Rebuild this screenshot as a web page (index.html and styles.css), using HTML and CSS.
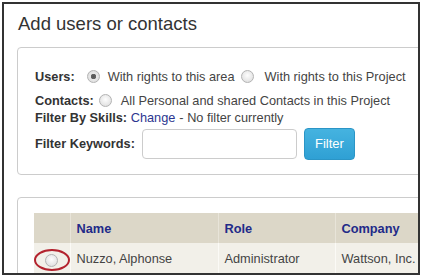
FILE: index.html
```html
<html>

<head>
	<title>Add users or contacts</title>
	<link rel="stylesheet" href="styles.css">
</head>

<body>
	<div class="frame">
		<h2 class="title">Add users or contacts</h2>

		<div class="panel filters">
			<div class="row">
				<b>Users:</b>
				<span class="radio checked first"></span>
				<span>With rights to this area</span>
				<span class="radio second"></span>
				<span>With rights to this Project</span>
			</div>
			<div class="row contacts">
				<b>Contacts:</b>
				<span class="radio"></span>
				<span>All Personal and shared Contacts in this Project</span>
			</div>
			<div class="row skills">
				<b>Filter By Skills:</b>
				<a href="#">Change</a>
				<span>- No filter currently</span>
			</div>
			<div class="row keywords">
				<b>Filter Keywords:</b>
				<input type="text" id="keywords" value="">
				<button type="button" class="btn">Filter</button>
			</div>
		</div>

		<div class="panel results">
			<table>
				<colgroup>
					<col class="c-pick">
					<col class="c-name">
					<col class="c-role">
					<col class="c-company">
				</colgroup>
				<tr>
					<th></th>
					<th>Name</th>
					<th>Role</th>
					<th>Company</th>
				</tr>
				<tr>
					<td class="pick"><span class="radio"></span><span class="mark"></span></td>
					<td>Nuzzo, Alphonse</td>
					<td>Administrator</td>
					<td>Wattson, Inc.</td>
				</tr>
			</table>
		</div>
	</div>
</body>

</html>
```

FILE: styles.css
```css
body { margin: 0; font-family: "Liberation Sans", Arial, sans-serif; font-size: 12.75px; color: #444; }
.frame { margin: 2px; width: 418px; height: 273px; box-sizing: border-box; border: 2px solid #333; padding: 9px 0 0 13px; overflow: hidden; background: #fff; }
.title { margin: 0 0 12px 1px; font-size: 18.5px; line-height: 22px; font-weight: normal; color: #333; }

.panel { width: 440px; border: 1px solid #ccc; border-radius: 4px; }
.filters { padding: 20px 17px 15px; }
.results { margin-top: 22px; padding: 15px 16px; }

.row { display: flex; align-items: center; height: 17px; line-height: 17px; white-space: nowrap; }
.row b { color: #333; }
.contacts { margin-top: 7px; }
.keywords { margin-top: 2px; height: 31px; }
.skills a { color: #2b3690; text-decoration: none; margin: 0 4px 0 0; }
.skills b::after { content: "\00a0"; }

.radio { display: inline-block; width: 11px; height: 11px; border: 1px solid #b3b3b3; border-radius: 50%; background: radial-gradient(circle at 50% 40%, #fdfdfd 0, #e4e4e4 70%, #d6d6d6 100%); margin: 0 9px 0 5px; flex: none; }
.radio.checked { background: radial-gradient(circle, #555 0, #666 2.5px, #e9e9e9 3px, #d8d8d8 100%); }
.radio.first { margin: 0 8px 0 12px; }
.radio.second { margin: 0 11px 0 6px; }

#keywords { width: 155px; height: 30px; box-sizing: border-box; margin-left: 7px; border: 1px solid #ccc; border-radius: 4px; }
.btn { width: 51px; height: 32px; margin-left: 7px; border: 1px solid #2b95c6; border-radius: 4px; background: linear-gradient(#45b3e0, #2fa0d4); color: #fff; font-family: inherit; font-size: 13px; padding: 0; }

table { border-collapse: collapse; table-layout: fixed; width: 460px; font-size: 12.75px; }
.c-pick { width: 36px; }
.c-name { width: 148px; }
.c-role { width: 117px; }
th { height: 30px; padding: 0 6px; text-align: left; background: #dcd7c8; color: #222a88; border-left: 1px solid #e8e4d9; }
td { height: 30px; padding: 0 6px; background: #f2f0e9; border-left: 1px solid #fbfaf6; white-space: nowrap; }
th:first-child, td:first-child { border-left: none; }
.pick { position: relative; padding: 0; }
.pick .radio { margin: 5px 0 0 11px; vertical-align: middle; }
.mark { position: absolute; left: 0; top: 6px; width: 36px; height: 22px; box-sizing: border-box; border: 2px solid #b3232e; border-radius: 50%; }
```
